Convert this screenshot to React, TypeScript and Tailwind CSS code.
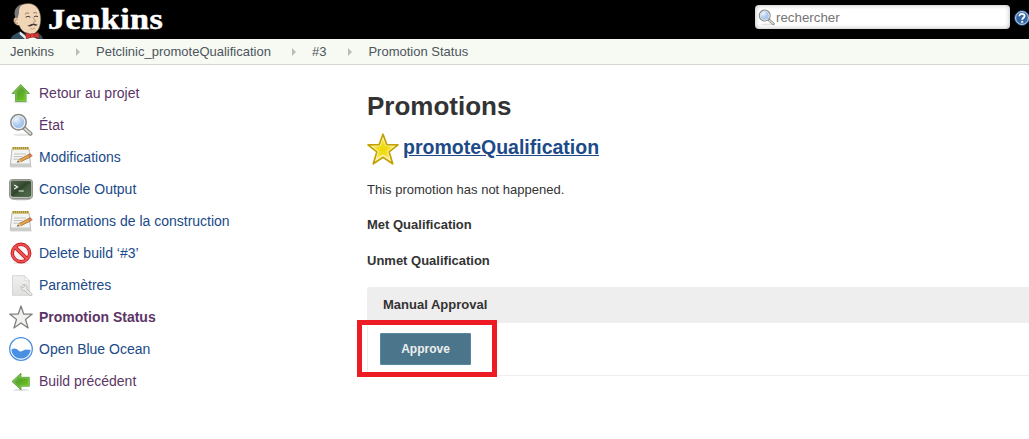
import React from "react";

type IconName = "up" | "search" | "notepad" | "terminal" | "delete" | "document" | "star" | "ocean" | "left";

const links: { icon: IconName; label: string; tone: string }[] = [
  { icon: "up", label: "Retour au projet", tone: "text-[#5c3566]" },
  { icon: "search", label: "État", tone: "text-[#5c3566]" },
  { icon: "notepad", label: "Modifications", tone: "text-[#204a87]" },
  { icon: "terminal", label: "Console Output", tone: "text-[#204a87]" },
  { icon: "notepad", label: "Informations de la construction", tone: "text-[#204a87]" },
  { icon: "delete", label: "Delete build ‘#3’", tone: "text-[#204a87]" },
  { icon: "document", label: "Paramètres", tone: "text-[#204a87]" },
  { icon: "star", label: "Promotion Status", tone: "text-[#5c3566] font-bold" },
  { icon: "ocean", label: "Open Blue Ocean", tone: "text-[#204a87]" },
  { icon: "left", label: "Build précédent", tone: "text-[#5c3566]" },
];

const crumbs = [
  { label: "Jenkins", gap: "mr-[22px]" },
  { label: "Petclinic_promoteQualification", gap: "mr-[21px]" },
  { label: "#3", gap: "mr-[22px]" },
];

function Magnifier({ className }: { className: string }) {
  return (
    <svg viewBox="0 0 24 24" className={className}>
      <ellipse cx="13" cy="21.8" rx="9" ry="1.3" fill="#000" opacity=".1" />
      <path d="M15.6 15.6l5.9 5.2" stroke="#85877f" strokeWidth="4" strokeLinecap="round" />
      <path d="M15.8 15.8l5.5 4.8" stroke="#d9dbd5" strokeWidth="2" strokeLinecap="round" />
      <circle cx="9.5" cy="9.3" r="7.6" fill="#b9d3f0" stroke="#888a88" strokeWidth="1.8" />
      <circle cx="9.5" cy="9.3" r="6.4" fill="url(#lens)" stroke="#eef0ef" strokeWidth="1.1" />
      <path d="M5.5 9C5.6 6.5 7.6 5 9.8 5" fill="none" stroke="#fff" strokeWidth="1" opacity=".7" />
    </svg>
  );
}

function Icon({ name }: { name: IconName }) {
  if (name === "search") return <Magnifier className="size-6" />;
  return (
    <svg viewBox="0 0 24 24" className="size-6">
      {name === "up" && (
        <>
          <ellipse cx="12" cy="21.1" rx="8" ry="1.2" fill="#000" opacity=".12" />
          <path d="M11.7 3.5L20.5 12.5H17.1V20.4H6.5V12.5H3Z" fill="url(#green)" stroke="#58a13a" strokeWidth=".8" strokeLinejoin="round" />
          <path d="M11.7 5L18.4 11.8H16.2V19.5H7.4V11.8H5.2Z" fill="none" stroke="#b2e08a" strokeWidth=".6" opacity=".6" />
        </>
      )}
      {name === "left" && (
        <>
          <ellipse cx="12" cy="21" rx="8" ry="1.2" fill="#000" opacity=".12" />
          <path d="M3 12.4L12 4.2V8.3H20.3V17.2H12V20.9Z" fill="url(#green)" stroke="#58a13a" strokeWidth=".8" strokeLinejoin="round" />
          <path d="M4.5 12.4L11.2 6.2V9.2H19.4V16.3H11.2V18.8Z" fill="none" stroke="#b2e08a" strokeWidth=".6" opacity=".6" />
        </>
      )}
      {name === "notepad" && (
        <>
          <rect x="1" y="21" width="22" height="1.5" rx=".7" fill="#000" opacity=".15" />
          <path d="M3 3.8H20L21.7 20.8H1.2Z" fill="#f4f4f2" stroke="#aaaba7" strokeWidth=".8" />
          <path d="M1.7 18.6H21.3L21.5 20.6H1.4Z" fill="#cbcdc7" />
          <path d="M5 9H17M4.8 11.6H13.5M4.5 14.2H12" stroke="#bcbdb9" strokeWidth=".9" />
          <rect x="3.2" y="2" width="16.8" height="2.6" fill="#d8c76b" />
          <path d="M3.8 3.2H20" stroke="#9a812b" strokeWidth="2.3" strokeDasharray="1 1" />
          <path d="M8.2 17.1L10.3 14.5L19.8 9.4L21.6 11.9L12.1 16.6Z" fill="#e8a449" stroke="#925f2c" strokeWidth=".7" />
          <path d="M19.2 9.7L21.5 8.6L23.4 10.9L21.3 12Z" fill="#d87b50" stroke="#ad5836" strokeWidth=".4" />
          <path d="M8.2 17.1L10.3 14.5L12.1 16.6Z" fill="#f0d4a2" />
          <path d="M8 17.3L9.1 16L10 16.9Z" fill="#333" />
        </>
      )}
      {name === "terminal" && (
        <>
          <ellipse cx="12" cy="22" rx="10" ry="1.3" fill="#000" opacity=".3" />
          <rect x=".6" y="2.6" width="22.8" height="18.8" rx="2.4" fill="#c6c8c1" stroke="#81857c" strokeWidth=".9" />
          <rect x="2.3" y="4.2" width="19.4" height="15.1" rx="1.2" fill="url(#screen)" stroke="#364832" strokeWidth=".9" />
          <path d="M5.2 7.9L8.6 10L5.2 12.1M9.6 14H14.8" fill="none" stroke="#f2f7ed" strokeWidth="1.2" />
          <circle cx="20" cy="20.3" r=".6" fill="#66b83e" />
        </>
      )}
      {name === "delete" && (
        <>
          <ellipse cx="12" cy="22" rx="8" ry="1" fill="#000" opacity=".1" />
          <circle cx="12" cy="12" r="8.7" fill="#f6f6f6" stroke="#c6191c" strokeWidth="3.4" />
          <path d="M6.3 6.4L17.7 17.6" stroke="#c6191c" strokeWidth="3.8" />
          <circle cx="12" cy="12" r="8.7" fill="none" stroke="#ed5558" strokeWidth="1.8" />
          <path d="M5.9 6L18.1 18" stroke="#ed5558" strokeWidth="2.2" />
        </>
      )}
      {name === "document" && (
        <>
          <path d="M3.5 2.7H15.3L20.3 7.7V22.3H3.5Z" fill="url(#silver)" stroke="#cececd" strokeWidth=".8" />
          <path d="M15.3 2.7C16 5 16 6.5 15.6 7.6C17 7.2 18.8 7.2 20.3 7.7Z" fill="#fafafa" stroke="#cececd" strokeWidth=".6" />
          <path d="M12.4 13.1L14.3 14.7L15.8 13.3L14.2 11.6C17 11.2 18.7 13.3 17.8 15.8L22.7 20.5C23.8 21.8 22.3 23.6 20.9 22.4L15.9 17.6C13.3 18.3 11.4 15.8 12.4 13.1Z" fill="#ececeb" stroke="#b4b5b3" strokeWidth=".9" />
        </>
      )}
      {name === "star" && (
        <path d="M12 1L14.7 9L23.3 9.1L16.5 14.4L19.1 23L12 18L4.9 23L7.5 14.4L.7 9.1L9.3 9Z" fill="#f1f1ef" stroke="#80827e" strokeWidth="1.3" strokeLinejoin="round" />
      )}
      {name === "ocean" && (
        <>
          <circle cx="12" cy="12" r="11.3" fill="#fff" stroke="#4a90e2" strokeWidth="1.3" />
          <path d="M2.4 12.4C5.4 10.7 7.8 11.7 9.5 13.5C12 16 14.3 12.6 16.5 12.4C18.3 12.2 19.5 13.3 21.6 12.5C21.3 17.7 17.2 21.6 12 21.6C6.8 21.6 2.7 17.6 2.4 12.4Z" fill="#4a90e2" />
        </>
      )}
    </svg>
  );
}

function Butler() {
  return (
    <svg viewBox="0 0 34 39" className="ml-[10px] h-[39px] w-[34px] shrink-0">
      <path d="M.8 39L2 36L9.5 31.5L20 36L28 32.5L31.8 36L32.8 39Z" fill="#335061" />
      <path d="M10.2 31.5L19 39H15L9.4 34Z" fill="#e9eef0" />
      <path d="M5.8 12C7 6.5 12.5 3.4 18.5 3.5C25.5 3.6 30.2 9 30.7 17.5C31.1 25 28.7 32.8 22.4 34.3C16.3 34.9 11 30.6 9.2 25.5C5.6 25.7 2.4 21.5 4.2 18.5C5 17.2 6 16.6 6.3 17Z" fill="#f0d6b7" stroke="#5a4940" strokeWidth=".5" />
      <path d="M5.4 17.5C2.7 11 6.4 5.4 12.4 4.3C9.3 7 8.8 10 8.9 13.6L7.4 18.8Z" fill="#77787a" />
      <path d="M7.4 20C5.6 18.8 4.2 20.2 5.6 22.4C6.3 23.4 7.4 23.7 8 23" fill="none" stroke="#a07b64" strokeWidth=".8" />
      <path d="M14.8 14.4Q16.5 12 19 13.2M23.3 12.9Q25.4 11.9 27 13.4" fill="none" stroke="#65534a" strokeWidth=".7" />
      <path d="M15.6 17.2Q18.2 15.4 20.4 17.2M24 16.8Q26 15.2 28 16.8" fill="none" stroke="#443832" strokeWidth="1" />
      <path d="M22.7 17.5L25.6 21.1Q25 22.4 23 21.9" fill="none" stroke="#a67c60" strokeWidth=".8" />
      <path d="M17.2 25.4C18.6 26.4 20.4 23.5 23 23.7C25 23 25.8 25 27.8 24.2C26.5 26.4 24.6 25.7 23.2 25.1C21.2 26.7 19 27 17.2 25.4Z" fill="#463934" />
      <path d="M20 28.5Q22.5 29.8 25 28.2" fill="none" stroke="#b98268" strokeWidth=".7" />
      <path d="M15.5 32.5L20.7 34.3L23.8 34.2L28.2 32.4L29.4 38.3L24 37.1L21 37.5L16.3 39Z" fill="#d33833" stroke="#831e20" strokeWidth=".5" />
      <rect x="20.6" y="33.7" width="3.4" height="3.7" rx=".8" fill="#ef3d3a" stroke="#831e20" strokeWidth=".5" />
      <path d="M18.5 38.4L21 37.7L24 37.5L27.2 39H18.5Z" fill="#fff" />
    </svg>
  );
}

export default function App() {
  return (
    <div className="h-[439px] w-[1029px] overflow-hidden bg-white font-['Liberation_Sans',Arial,sans-serif] text-[13px] text-[#333]">
      <svg className="absolute size-0" aria-hidden="true">
        <defs>
          <linearGradient id="green" x2="1" y2="1"><stop stopColor="#8ac85d" /><stop offset=".45" stopColor="#58a52b" /><stop offset="1" stopColor="#73d216" /></linearGradient>
          <linearGradient id="silver" x2="0" y2="1"><stop stopColor="#f0f0f0" /><stop offset="1" stopColor="#e0e0df" /></linearGradient>
          <linearGradient id="screen" x2="1" y2="1"><stop stopColor="#586b50" /><stop offset=".5" stopColor="#30442b" /><stop offset=".55" stopColor="#3f5638" /><stop offset="1" stopColor="#52704a" /></linearGradient>
          <radialGradient id="lens" cx=".35" cy=".3"><stop stopColor="#e4effa" /><stop offset="1" stopColor="#a6c6ec" /></radialGradient>
          <radialGradient id="gold"><stop stopColor="#f0d600" /><stop offset=".55" stopColor="#f1df28" /><stop offset="1" stopColor="#f8ec75" /></radialGradient>
        </defs>
      </svg>
      <header className="flex h-[39px] items-start bg-black">
        <Butler />
        <span className="ml-1 h-[39px] w-[115px] origin-left scale-x-[1.14] font-['Liberation_Serif',serif] text-[30px] leading-[37px] font-bold tracking-[0.4px] text-white [-webkit-text-stroke:0.5px_white]">Jenkins</span>
        <div className="mt-[5px] ml-auto flex h-6 w-[255px] items-center rounded-[4px] bg-white pl-[3px] shadow-[inset_0_0_5px_rgba(0,0,0,0.3)]">
          <Magnifier className="size-[17px]" />
          <input aria-label="rechercher" placeholder="rechercher" className="mt-px ml-[1px] w-[220px] bg-transparent text-[13.33px] leading-5 outline-none placeholder:text-[#757575]" />
        </div>
        <svg viewBox="0 0 16 16" className="mt-[10px] mr-[-1px] ml-[4px] size-4 shrink-0">
          <circle cx="8" cy="8" r="7.3" fill="#3465a4" stroke="#204a87" strokeWidth="1" />
          <circle cx="8" cy="8" r="6.4" fill="none" stroke="#dfe8f3" strokeWidth=".9" />
          <path d="M5.4 6.2C5.5 3.2 10.7 3.2 10.6 6C10.5 7.8 8.2 7.7 8.2 9.8" fill="none" stroke="#fff" strokeWidth="1.8" />
          <rect x="7.2" y="10.9" width="2" height="1.9" fill="#fff" />
        </svg>
      </header>
      <nav className="flex h-[26px] items-center border-b border-[#d3d7cf] bg-[#f6faf2] pl-[10px] text-[13px] text-[#4d545d]">
        {crumbs.map((crumb) => (
          <React.Fragment key={crumb.label}>
            <span className={crumb.gap}>{crumb.label}</span>
            <svg viewBox="0 0 4 8" className="mt-px mr-[16px] h-2 w-1"><path d="M0 0L4 4L0 8Z" fill="#babdb6" /></svg>
          </React.Fragment>
        ))}
        <span>Promotion Status</span>
      </nav>
      <div className="flex">
        <aside className="w-[367px] shrink-0 pt-3 pl-[9px]">
          {links.map((link) => (
            <a key={link.label} className={`flex h-8 items-center gap-[6px] text-[14px] ${link.tone}`}>
              <Icon name={link.icon} />
              <span>{link.label}</span>
            </a>
          ))}
        </aside>
        <main className="min-w-0 flex-1 pt-[26px]">
          <h1 className="text-[26px] leading-[30px] font-bold">Promotions</h1>
          <h2 className="mt-3 flex h-8 items-center text-[19.5px] font-bold text-[#204a87]">
            <svg viewBox="0 0 32 32" className="mr-1 size-8">
              <path d="M16 1.2L19.8 11.6L31 11.9L22.1 18.8L25.7 30.8L16 24.2L6.3 30.8L9.9 18.8L1 11.9L12.2 11.6Z" fill="#fffbc9" stroke="#c4a000" strokeWidth="1.7" strokeLinejoin="round" />
              <path d="M16 5.5L18.7 13.1L26.9 13.4L20.3 18.2L22.9 26.6L16 21.7L9.1 26.6L11.7 18.2L5.1 13.4L13.3 13.1Z" fill="url(#gold)" />
            </svg>
            <a className="mb-[2px] underline">promoteQualification</a>
          </h2>
          <p className="mt-[17px] leading-4">This promotion has not happened.</p>
          <p className="mt-[19px] leading-4 font-bold">Met Qualification</p>
          <p className="mt-5 leading-4 font-bold">Unmet Qualification</p>
          <section className="mt-[18px] h-[89px] rounded-tl-[4px] border-b border-l border-[#eee]">
            <h3 className="-ml-px h-9 rounded-tl-[4px] bg-[#eee] pl-4 text-[13px] leading-9 font-bold">Manual Approval</h3>
            <div className="relative h-[52px] pt-[10px] pl-[12px]">
              <button className="h-8 w-[91px] rounded-[1px] border border-[#5788a1] bg-[#4b758b] text-[12px] font-bold text-[#eee]">Approve</button>
              <div className="absolute top-[-3px] left-[-11px] h-[57px] w-[140px] border-[5px] border-[#ed1c24]" />
            </div>
          </section>
        </main>
      </div>
    </div>
  );
}
